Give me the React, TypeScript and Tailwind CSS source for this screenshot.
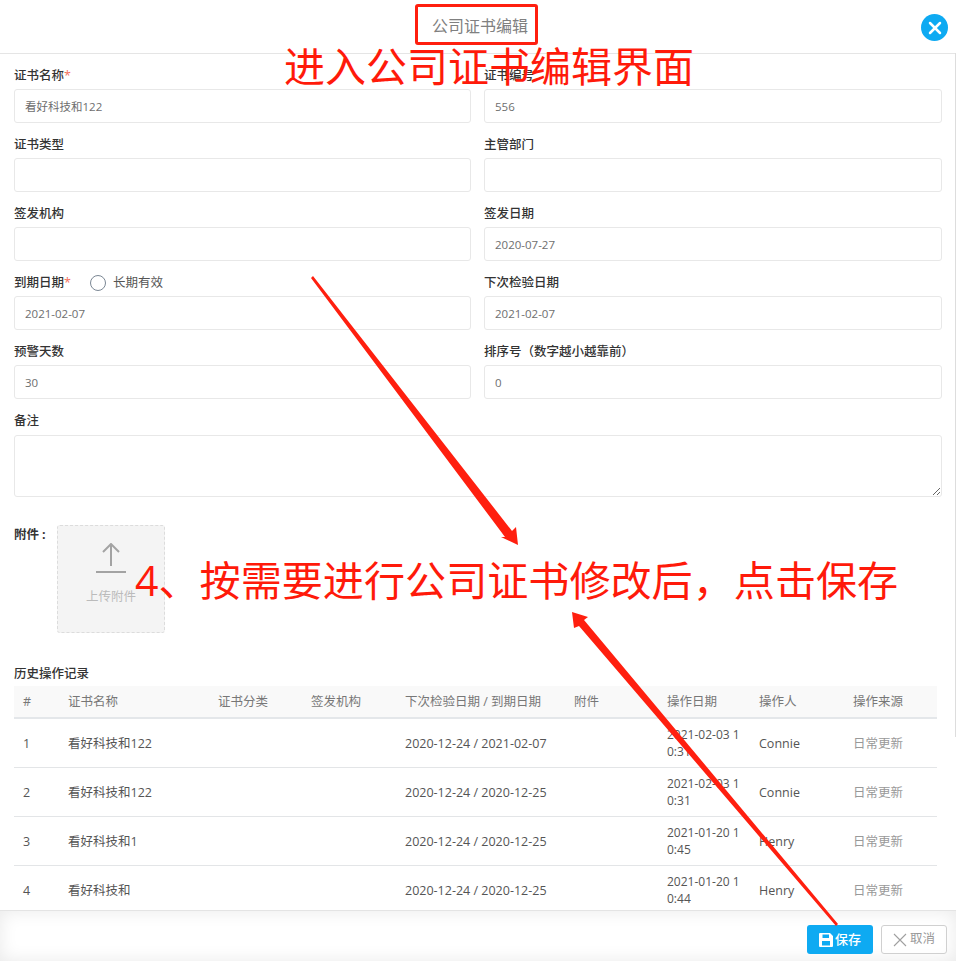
import { X } from "lucide-react";

type Field = {
    label: string;
    value?: string;
    required?: boolean;
    radio?: boolean;
};

const fields: Field[] = [
    { label: "证书名称", value: "看好科技和122", required: true },
    { label: "证书编号", value: "556" },
    { label: "证书类型" },
    { label: "主管部门" },
    { label: "签发机构" },
    { label: "签发日期", value: "2020-07-27" },
    { label: "到期日期", value: "2021-02-07", required: true, radio: true },
    { label: "下次检验日期", value: "2021-02-07" },
    { label: "预警天数", value: "30" },
    { label: "排序号（数字越小越靠前）", value: "0" },
];

const columns = ["#", "证书名称", "证书分类", "签发机构", "下次检验日期 / 到期日期", "附件", "操作日期", "操作人", "操作来源"];

const rows = [
    { id: 1, name: "看好科技和122", dates: "2020-12-24 / 2021-02-07", time: "2021-02-03 10:31", user: "Connie" },
    { id: 2, name: "看好科技和122", dates: "2020-12-24 / 2020-12-25", time: "2021-02-03 10:31", user: "Connie" },
    { id: 3, name: "看好科技和1", dates: "2020-12-24 / 2020-12-25", time: "2021-01-20 10:45", user: "Henry" },
    { id: 4, name: "看好科技和", dates: "2020-12-24 / 2020-12-25", time: "2021-01-20 10:44", user: "Henry" },
];

function FormField({ field }: { field: Field }) {
    return (
        <div>
            <div className="flex h-[19px] items-center pt-[1px] text-[12.5px] font-medium leading-[18px] text-[#333]">
                <span>{field.label}</span>
                {field.required && <span className="text-[#f2705c]">*</span>}
                {field.radio && (
                    <span className="ml-[19px] flex items-center font-normal text-[#555]">
                        <span className="h-[16px] w-[16px] rounded-full border border-[#7b8794] bg-white" />
                        <span className="ml-[7px]">长期有效</span>
                    </span>
                )}
            </div>
            <input
                readOnly
                defaultValue={field.value ?? ""}
                className="mt-[4px] block h-[34px] w-full rounded-[3px] border border-[#e8e8e8] bg-white px-[10px] text-[11.5px] text-[#6e6e6e] outline-none"
            />
        </div>
    );
}

function UploadBox() {
    return (
        <div className="ml-[14px] flex h-[108px] w-[108px] flex-col items-center rounded-[3px] border border-dashed border-[#dcdcdc] bg-[#f4f4f4] pt-[17px]">
            <svg width="30" height="30" viewBox="0 0 30 30" fill="none" stroke="#a3a3a3" strokeWidth="2">
                <path d="M15 1V23" />
                <path d="M7 9L15 1L23 9" />
                <path d="M0 29H30" />
            </svg>
            <span className="mt-[15px] text-[12.5px] leading-[18px] text-[#bbb]">上传附件</span>
        </div>
    );
}

function HistoryTable() {
    return (
        <table className="w-[923px] table-fixed border-collapse text-[12.5px] text-[#555]">
            <colgroup>
                <col className="w-[45px]" />
                <col className="w-[150px]" />
                <col className="w-[93px]" />
                <col className="w-[94px]" />
                <col className="w-[169px]" />
                <col className="w-[93px]" />
                <col className="w-[92px]" />
                <col className="w-[94px]" />
                <col className="w-[93px]" />
            </colgroup>
            <thead>
                <tr className="h-[32px] border-b-2 border-[#e4e7ea] bg-[#f9f9f9]">
                    {columns.map((col) => (
                        <th key={col} className="whitespace-nowrap px-[9px] pt-[1px] text-left font-normal text-[#777]">
                            {col}
                        </th>
                    ))}
                </tr>
            </thead>
            <tbody>
                {rows.map((row) => (
                    <tr key={row.id} className="h-[49px] border-b border-[#e3e5e7]">
                        <td className="px-[9px] pt-[3px]">{row.id}</td>
                        <td className="px-[9px] pt-[3px]">{row.name}</td>
                        <td className="px-[9px]" />
                        <td className="px-[9px]" />
                        <td className="whitespace-nowrap px-[9px] pt-[3px]">{row.dates}</td>
                        <td className="px-[9px]" />
                        <td className="break-all px-[9px] text-xs leading-[17px]">{row.time}</td>
                        <td className="px-[9px] pt-[3px]">{row.user}</td>
                        <td className="px-[9px] pt-[3px] text-[#999]">日常更新</td>
                    </tr>
                ))}
            </tbody>
        </table>
    );
}

function Annotations() {
    return (
        <>
            <div className="absolute left-[284px] top-[38px] whitespace-nowrap text-[41px] leading-[56px] text-[#ff1a0a]">
                进入公司证书编辑界面
            </div>
            <div className="absolute left-[135px] top-[552px] whitespace-nowrap text-[41.1px] leading-[56px] text-[#ff1a0a]">
                4、按需要进行公司证书修改后，点击保存
            </div>
            <svg className="absolute left-0 top-0" width="956" height="961" fill="#ff1f0f">
                <polygon points="518,545 516,527 512,531 313,276 311,278 505,537 501,537" />
                <polygon points="572,612 588,617 584,620 838,924 836,926 579,626 574,628" />
            </svg>
        </>
    );
}

export default function App() {
    return (
        <div className="relative flex h-[961px] w-[956px] flex-col overflow-hidden bg-white font-['Open_Sans','Noto_Sans_CJK_SC',sans-serif]">
            <header className="relative flex h-[54px] shrink-0 items-start justify-center border-b border-[#e5e5e5]">
                <div className="mr-[3px] mt-[4px] h-[41px] rounded-[3px] border-[3px] border-[#ff1f0f] pl-[14px] pr-[7px] text-base leading-[38px] text-[#808080]">
                    公司证书编辑
                </div>
                <button className="absolute right-[8px] top-[14px] flex h-[27px] w-[27px] items-center justify-center rounded-full bg-[#0eaaf2] text-white">
                    <X size={20} strokeWidth={3} />
                </button>
            </header>

            <main className="min-h-0 flex-1 overflow-hidden pl-[14px] pr-[14px] pt-[12px]">
                <div className="grid grid-cols-[457px_458px] gap-x-[13px] gap-y-[12px]">
                    {fields.map((field) => (
                        <FormField key={field.label} field={field} />
                    ))}
                </div>

                <div className="mt-[12px] h-[19px] pt-[1px] text-[12.5px] font-medium leading-[18px] text-[#333]">备注</div>
                <textarea className="mt-[5px] block h-[62px] w-full rounded-[3px] border border-[#e8e8e8] outline-none" />

                <div className="mt-[28px] flex items-start">
                    <span className="w-[29px] whitespace-nowrap pt-[1px] text-[12.5px] font-bold leading-[18px] text-[#333]">
                        附件<span className="ml-[3px]">:</span>
                    </span>
                    <UploadBox />
                </div>

                <div className="mt-[32px] h-[18px] text-[12.5px] font-medium leading-[18px] text-[#333]">历史操作记录</div>
                <div className="mt-[3px]">
                    <HistoryTable />
                </div>
            </main>

            <footer className="flex h-[51px] shrink-0 items-start justify-end gap-[8px] border-t border-[#e4e4e4] bg-white pr-[9px] pt-[14px] shadow-[inset_0_0_18px_rgba(0,0,0,0.09)]">
                <button className="flex h-[29px] w-[66px] items-center justify-center gap-[2px] rounded-[3px] bg-[#0eaaf2] text-[13px] font-medium text-white">
                    <svg width="14" height="14" viewBox="0 0 14 14">
                        <path
                            fill="#fff"
                            fillRule="evenodd"
                            d="M1 0H11L14 3V13A1 1 0 0 1 13 14H1A1 1 0 0 1 0 13V1A1 1 0 0 1 1 0ZM3.5 1.5V5H10V1.5ZM3 8V12.5H11V8Z"
                        />
                    </svg>
                    保存
                </button>
                <button className="flex h-[29px] w-[66px] items-center justify-center gap-[3px] rounded-[3px] border border-[#d0d0d0] bg-white/60 text-[12.5px] text-[#999]">
                    <svg width="14" height="14" viewBox="0 0 14 14" stroke="#a0a0a0" strokeWidth="1.1">
                        <path d="M1 1L13 13M13 1L1 13" />
                    </svg>
                    取消
                </button>
            </footer>

            <div className="absolute right-0 top-[53px] h-[684px] w-px bg-[#dddddd]" />
            <Annotations />
        </div>
    );
}
